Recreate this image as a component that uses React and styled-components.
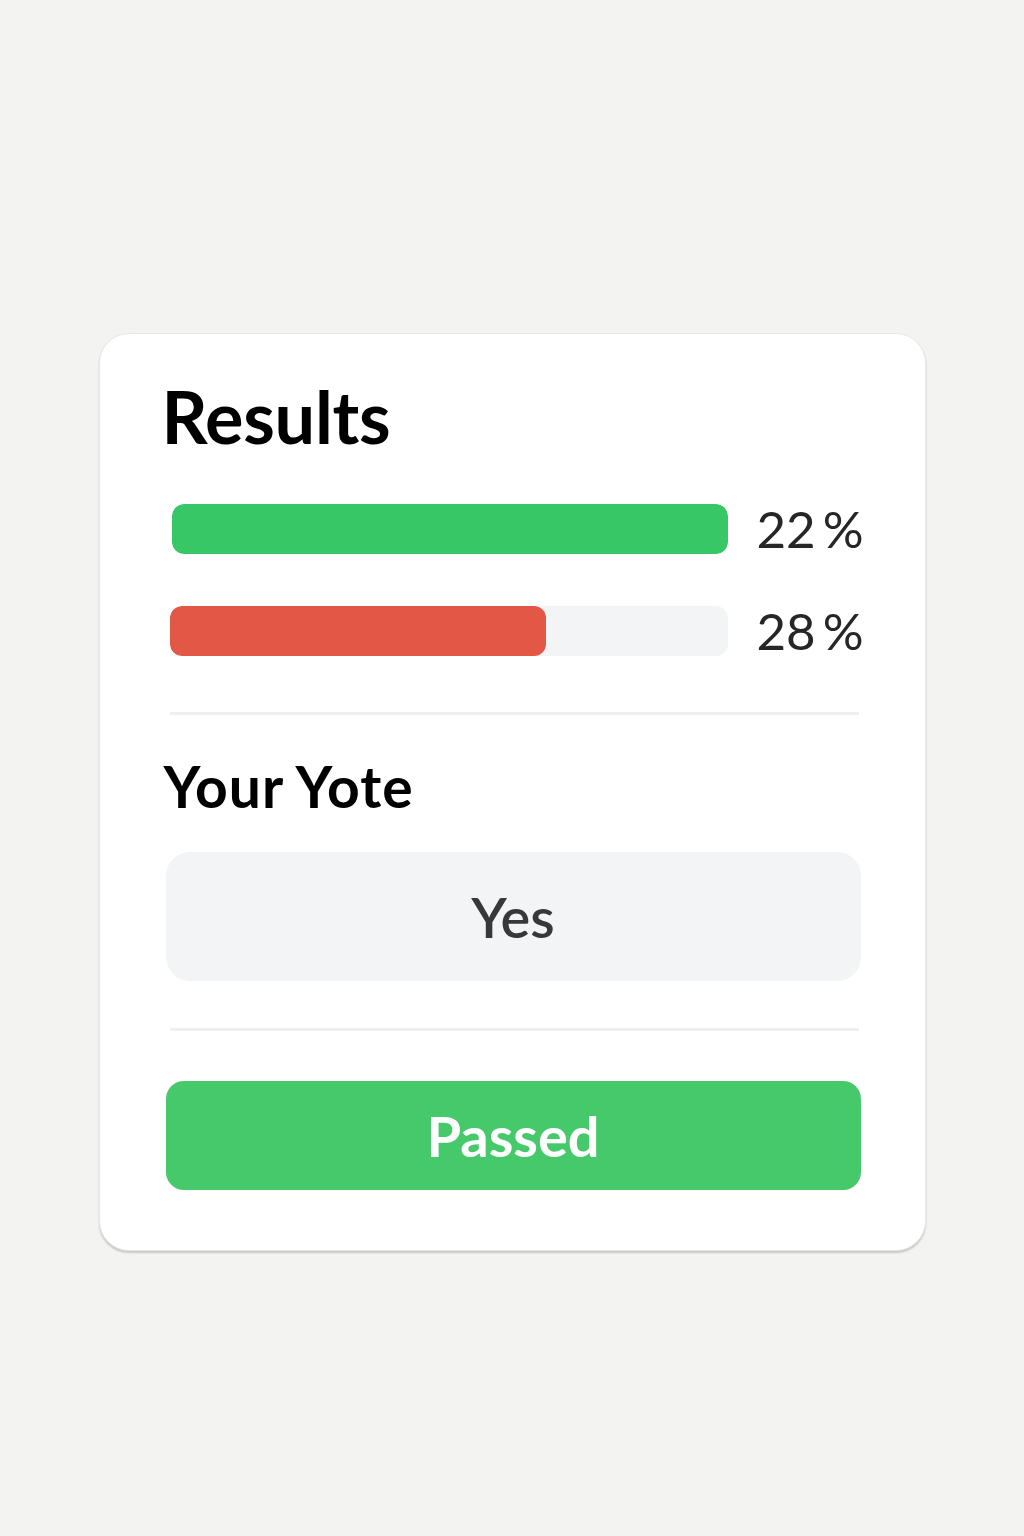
import React from "react";
import styled, { createGlobalStyle } from "styled-components";

const Global = createGlobalStyle`
  html, body {
    margin: 0;
    padding: 0;
    background: #f3f3f2;
  }
  body {
    font-family: Lato, "Open Sans", Arial, sans-serif;
    min-height: 1536px;
  }
`;

const Page = styled.main`
  display: flex;
  justify-content: center;
  padding-top: 333px;
`;

const Card = styled.section`
  box-sizing: border-box;
  width: 827px;
  background: #ffffff;
  border: 1px solid #e7e7e6;
  border-radius: 30px;
  box-shadow: 0 2px 2px rgba(0, 0, 0, 0.18);
  padding: 46px 64px 60px 66px;
  display: flex;
  flex-direction: column;
`;

const Heading = styled.h2`
  margin: 0 0 0 ${(p) => p.$indent || 0}px;
  font-family: Lato, sans-serif;
  font-weight: 700;
  font-size: ${(p) => p.$size}px;
  line-height: 1;
  letter-spacing: ${(p) => p.$tracking || 0}px;
  color: #000;
`;

const Bars = styled.div`
  margin-top: 51px;
  display: flex;
  flex-direction: column;
  gap: 51px;
`;

const BarRow = styled.div`
  display: flex;
  align-items: center;
  gap: 29px;
`;

const Track = styled.div`
  flex: 0 0 ${(p) => p.$width}px;
  height: 50px;
  margin-left: ${(p) => p.$shift}px;
  border-radius: 12px;
  background: #f3f4f6;
  overflow: hidden;
`;

const Fill = styled.div`
  height: 100%;
  border-radius: 12px;
  background: ${(p) => p.$color};
`;

const Percent = styled.span`
  flex: none;
  white-space: nowrap;
  font-family: Lato, sans-serif;
  font-weight: 400;
  font-size: 51px;
  line-height: 1;
  word-spacing: -6px;
  color: #262626;
`;

const Divider = styled.hr`
  border: none;
  height: 3px;
  background: #efefef;
  margin: ${(p) => p.$top}px 2px 0 4px;
`;

const Choice = styled.div`
  margin-top: 37px;
  height: 129px;
  border-radius: 24px;
  background: #f3f4f6;
  display: flex;
  align-items: center;
  justify-content: center;
  font-family: Lato, sans-serif;
  font-weight: 600;
  font-size: 56px;
  color: #383838;
`;

const Status = styled.div`
  margin-top: 50px;
  height: 109px;
  border-radius: 18px;
  background: #45c96b;
  display: flex;
  align-items: center;
  justify-content: center;
  font-family: Lato, sans-serif;
  font-weight: 700;
  font-size: 56px;
  color: #ffffff;
`;

const results = [
  { label: "22 %", value: 100, color: "#38c767", shift: 6, width: 556 },
  { label: "28 %", value: 67.4, color: "#e25746", shift: 4, width: 558 },
];

export default function App() {
  return (
    <>
      <Global />
      <Page>
        <Card>
          <Heading $size={72} $tracking={-0.3} $indent={-4}>Results</Heading>
          <Bars>
            {results.map((r) => (
              <BarRow key={r.label}>
                <Track $shift={r.shift} $width={r.width}>
                  <Fill $color={r.color} style={{ width: `${r.value}%` }} />
                </Track>
                <Percent>{r.label}</Percent>
              </BarRow>
            ))}
          </Bars>
          <Divider $top={56} />
          <Heading $size={57} $tracking={1} $indent={-2} style={{ marginTop: 43 }}>Your Yote</Heading>
          <Choice>Yes</Choice>
          <Divider $top={47} />
          <Status>Passed</Status>
        </Card>
      </Page>
    </>
  );
}
